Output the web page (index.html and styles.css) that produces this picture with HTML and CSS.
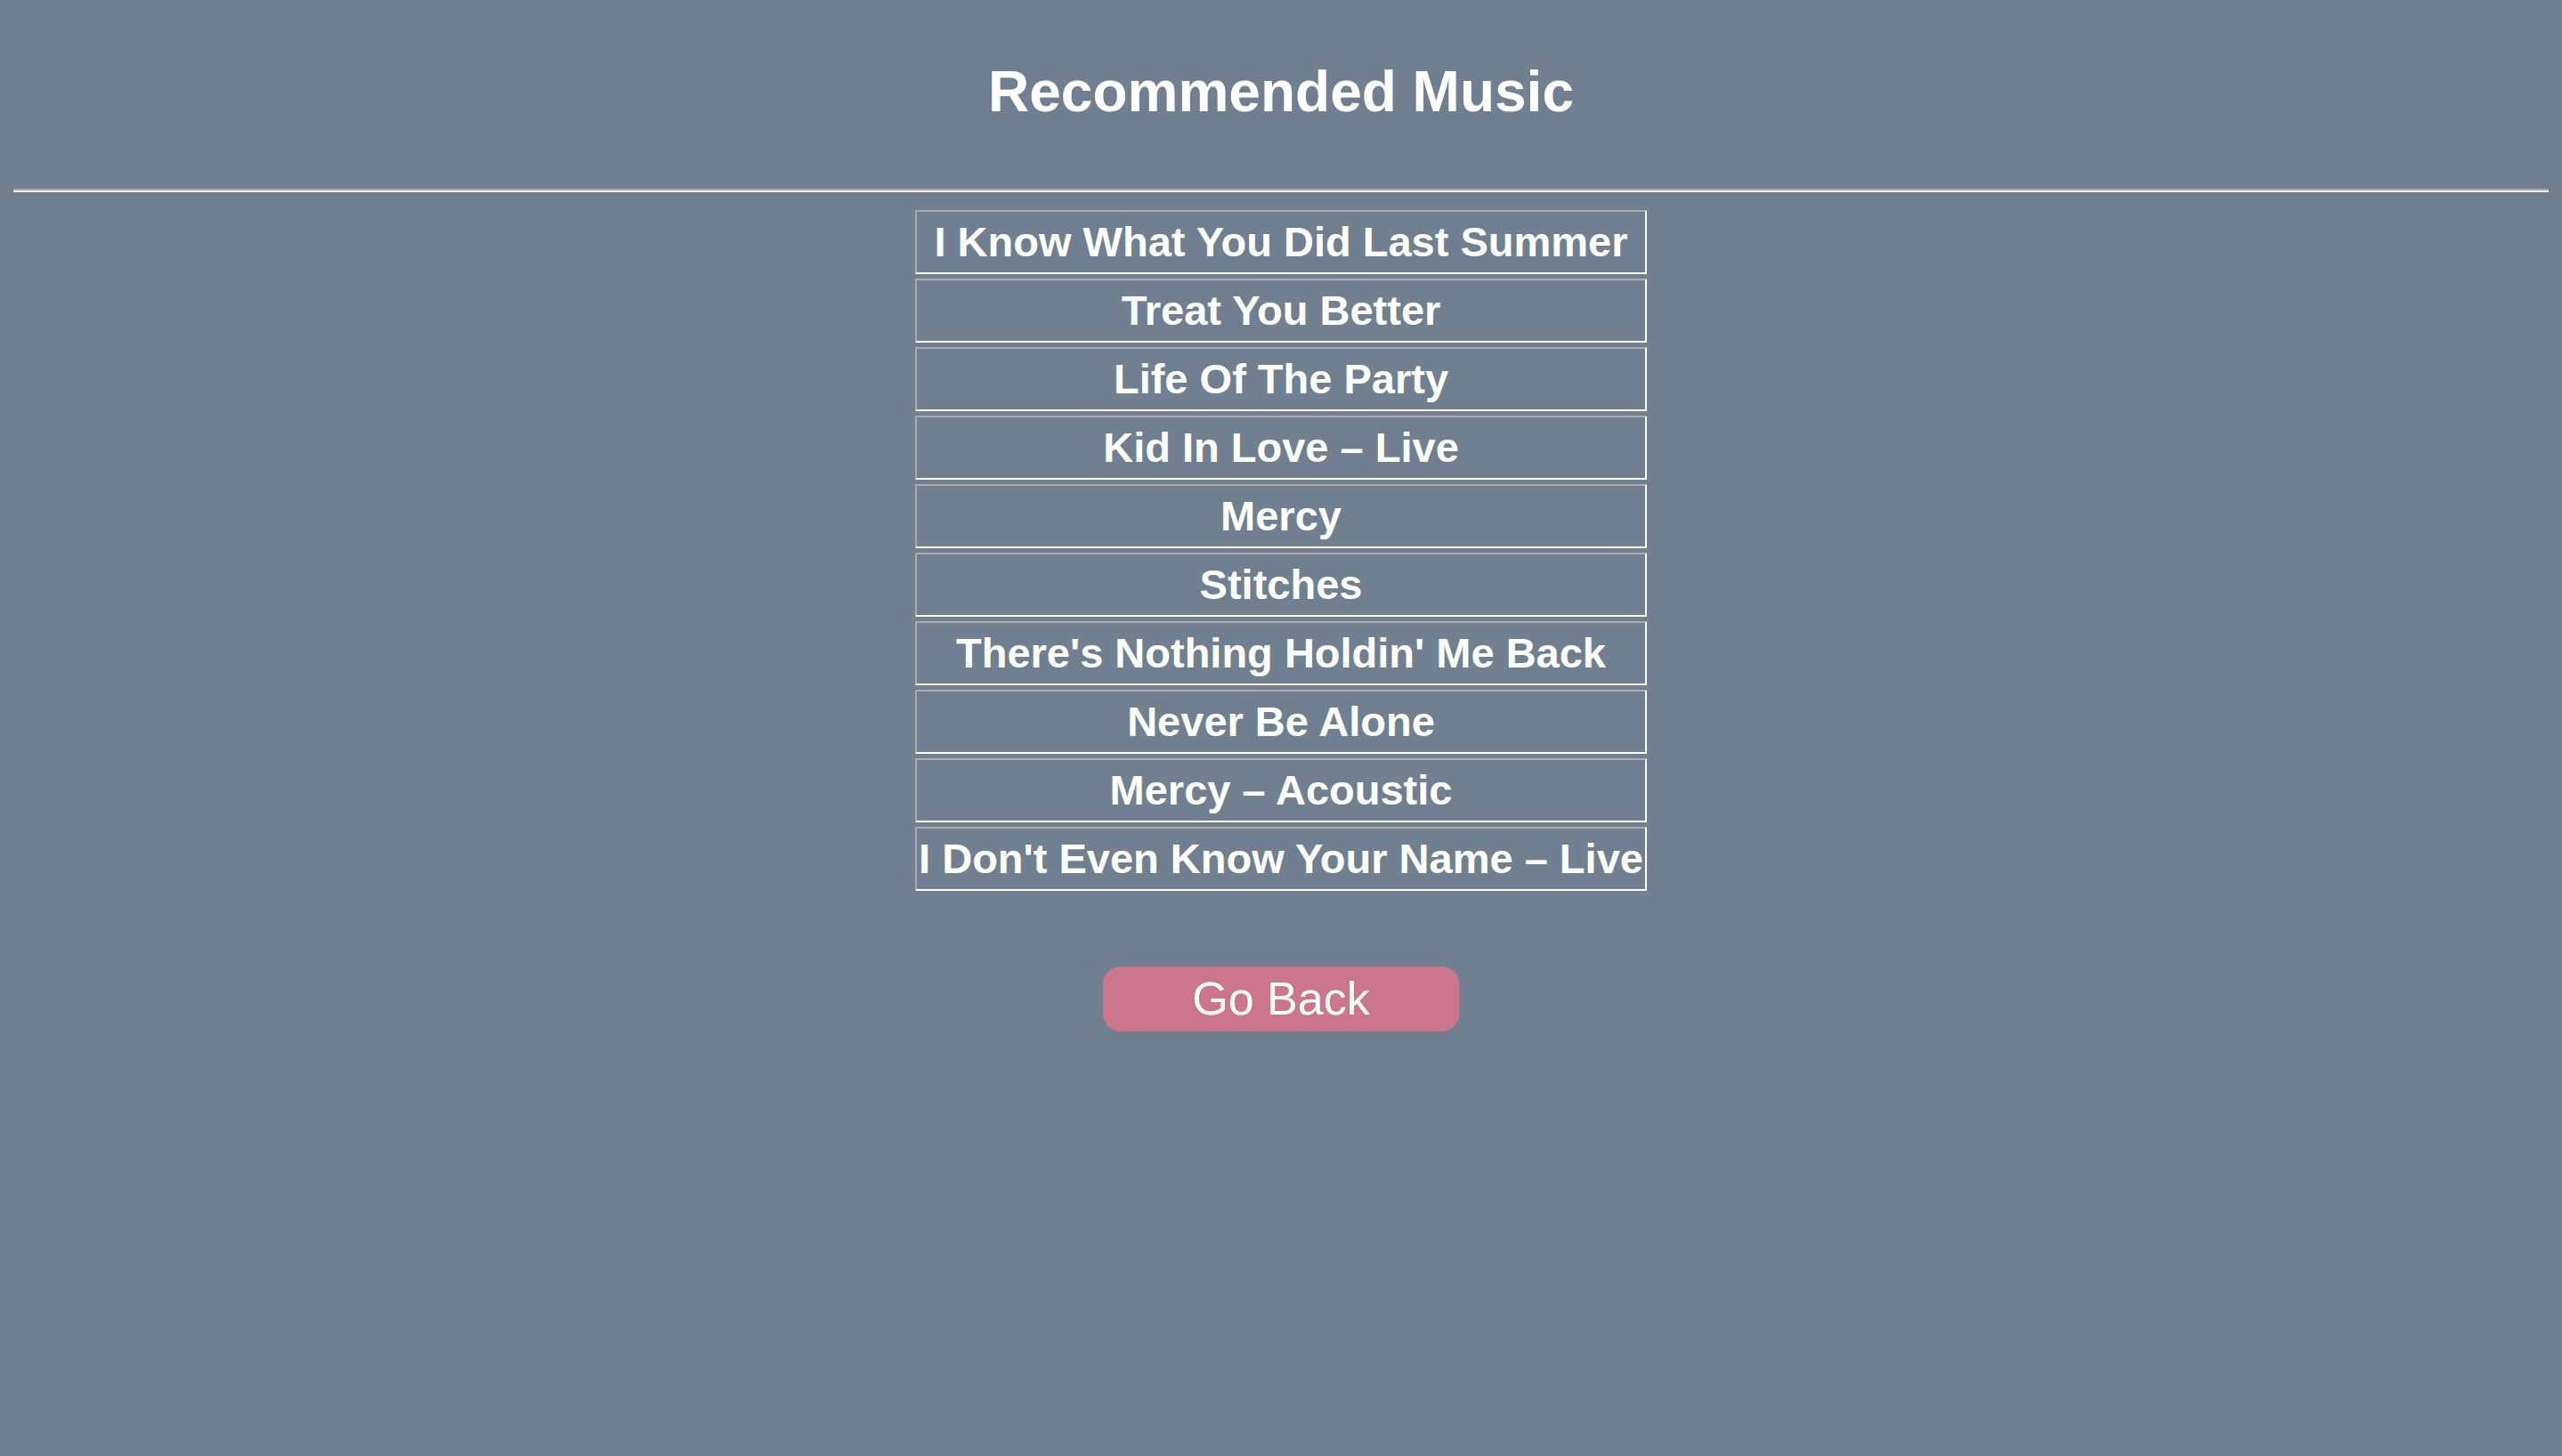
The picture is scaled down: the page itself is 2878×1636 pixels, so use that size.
FILE: index.html
```html
<!DOCTYPE html>
<html lang="en">
<head>
<meta charset="utf-8">
<title>Recommended Music</title>
<link rel="stylesheet" href="styles.css">
</head>
<body>
<div class="page">
  <h1 class="title">Recommended Music</h1>
  <div class="rule"></div>
  <ul class="songs">
    <li class="song">I Know What You Did Last Summer</li>
    <li class="song">Treat You Better</li>
    <li class="song">Life Of The Party</li>
    <li class="song">Kid In Love – Live</li>
    <li class="song">Mercy</li>
    <li class="song">Stitches</li>
    <li class="song">There's Nothing Holdin' Me Back</li>
    <li class="song">Never Be Alone</li>
    <li class="song">Mercy – Acoustic</li>
    <li class="song">I Don't Even Know Your Name – Live</li>
  </ul>
  <div class="actions">
    <button class="back" type="button">Go Back</button>
  </div>
</div>
</body>
</html>
```

FILE: styles.css
```css
html, body {
  margin: 0;
  padding: 0;
  background: #708090;
  height: 100%;
}
body {
  font-family: "Liberation Sans", Arial, sans-serif;
  color: #ffffff;
}
.page {
  padding: 0 15px;
  display: flex;
  flex-direction: column;
  align-items: center;
}
.title {
  margin: 66px 0 0;
  font-size: 64px;
  line-height: 74px;
  font-weight: bold;
  text-align: center;
}
.rule {
  align-self: stretch;
  margin-top: 72px;
  height: 0;
  border-top: 2px solid #a3a5a8;
  border-bottom: 2px solid #eeeeee;
}
.songs {
  list-style: none;
  margin: 20px 0 0;
  padding: 0;
  width: 822px;
  display: flex;
  flex-direction: column;
  gap: 5px;
}
.song {
  box-sizing: border-box;
  height: 72px;
  border-style: solid;
  border-width: 2px;
  border-color: #a9abae #ffffff #ffffff #a9abae;
  font-size: 47px;
  font-weight: bold;
  line-height: 68px;
  text-align: center;
  white-space: nowrap;
}
.actions {
  margin-top: 85px;
  display: flex;
  justify-content: center;
}
.back {
  width: 400px;
  height: 73px;
  border: none;
  border-radius: 20px;
  background: #cc768d;
  color: #ffffff;
  font-family: "Liberation Sans", Arial, sans-serif;
  font-size: 52px;
  line-height: 73px;
  padding: 0;
}
```
